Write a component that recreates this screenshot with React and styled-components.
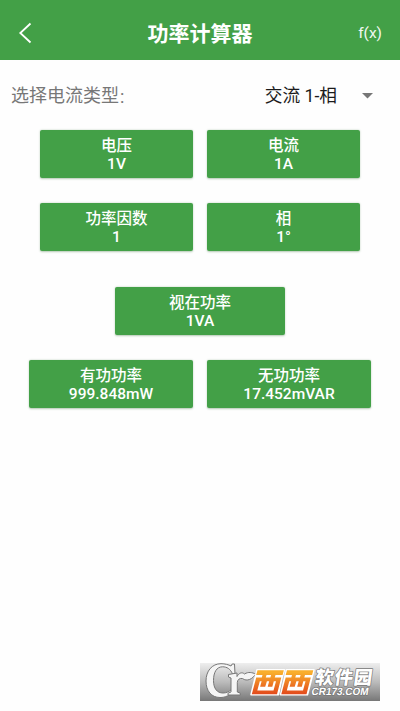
import React from "react";
import styled, { createGlobalStyle } from "styled-components";

const Global = createGlobalStyle`
  * { box-sizing: border-box; }
  body { margin: 0; background: #fefefe; font-family: Roboto, "Noto Sans CJK SC", sans-serif; }
`;
const Screen = styled.main`
  display: flex; flex-direction: column; height: 711px; overflow: hidden; background: #fefefe;
`;
const Header = styled.header`
  display: grid; grid-template-columns: 80px 1fr 80px; align-items: center;
  height: 60px; padding: 6px 18px 0; background: #43a047; color: #fff;
`;
const BackIcon = styled.svg`display: block; width: 14px; height: 22px;`;
const Title = styled.h1`
  margin: 0; padding-top: 1px; text-align: center; font-size: 21px; line-height: 28px; font-weight: 700; white-space: nowrap;
`;
const Formula = styled.span`justify-self: end; font-size: 15.5px; line-height: 20px; color: #f0f8f0;`;
const TypeRow = styled.section`
  display: flex; align-items: center; justify-content: space-between;
  height: 70px; padding: 2px 27px 0 11px;
`;
const Label = styled.span`
  display: flex; font-size: 18px; line-height: 26px; color: #777;
`;
const Colon = styled.span`margin-left: 1px; padding-top: 1px;`;
const Select = styled.div`
  display: flex; align-items: center; gap: 25px; font-size: 17.7px; line-height: 26px; color: #1b1b1b;
`;
const Caret = styled.svg`width: 11px; height: 6px;`;
const ButtonRow = styled.div`
  display: flex; justify-content: center; gap: 14px; height: 48px;
  margin-top: ${(p) => p.$top}px;
`;
const ValueButton = styled.button`
  width: ${(p) => p.$width}px; padding: 2px 0 0; border: 0; border-radius: 2px;
  background: #43a047; color: #fff; font: 500 15.5px/18px Roboto, "Noto Sans CJK SC", sans-serif;
  box-shadow: 0 0.5px 2px rgba(40, 100, 40, 0.35);
`;
const Line = styled.span`display: block; height: 18px; white-space: nowrap;`;
const Watermark = styled.svg`
  display: block; flex: none; width: 180px; height: 38px; margin: auto 0 10px 200px;
`;
const LogoText = styled.text`
  font-family: ${(p) => (p.$latin ? '"Liberation Sans", sans-serif' : '"Noto Sans CJK SC", sans-serif')};
  font-size: ${(p) => p.$size}px; font-weight: ${(p) => (p.$latin ? 700 : 900)};
  paint-order: stroke; stroke-linejoin: round;
`;

const rows = [
  { top: 0, width: 153, items: [["电压", "1V"], ["电流", "1A"]] },
  { top: 25, width: 153, items: [["功率因数", "1"], ["相", "1°"]] },
  { top: 36, width: 170, items: [["视在功率", "1VA"]] },
  { top: 25, width: 164, items: [["有功功率", "999.848mW"], ["无功功率", "17.452mVAR"]] },
];

function Logo() {
  return (
    <Watermark viewBox="0 0 180 38">
      <defs>
        <linearGradient id="plate" x2="0" y2="1"><stop stopColor="#eee" /><stop offset=".5" stopColor="#bbb" /><stop offset="1" stopColor="#777" /></linearGradient>
        <linearGradient id="orange" x2="0" y2="1"><stop offset=".1" stopColor="#f9ae2c" /><stop offset="1" stopColor="#e2491c" /></linearGradient>
      </defs>
      <path fill="url(#plate)" d="M0 0H180V38H0z" />
      <g fill="#f5f5f5" stroke="#777" strokeWidth="1" strokeLinejoin="round">
        <path d="M34.500 1 35 11h-2.500C30.500 6 27 3.800 22.500 3.800 16.500 3.800 13.500 9.500 13.500 17.500S17 30 23 30c3.500 0 6-1.200 8.500-3.500l1.500 2C29.500 32.500 25.500 34.500 20 34.500 11.500 34.500 6 28 6 18S12 .7 21 .7c4 0 7.500 1 10 2.300l1.200-2z" />
        <path d="M28.500 11.500 37 10v3.500c2-3.500 5-4.800 7.500-2.500 4-2.500 7.500-1.500 11.300 0-3.300 5-8.800 8-13.300 4.500-3-.5-5 1-5.200 4V29l3 1.200V32H28v-1.800l3-1.200V15l-2.500-1z" />
      </g>
      <path d="M57 6.700h27.500l-2 6-4 19H51zM86.500 6.700H114l-6.500 25h-27z" fill="#fff" stroke="#fff" strokeWidth="1.500" strokeLinejoin="round" />
      <g fill="url(#orange)">
        <path id="west" fillRule="evenodd" d="M57.500 7.200h26.300l-1.200 4.800h-7.100l-.7 2.600h6.500L77 31.300H51.800L56.200 14.600h5.600l.7-2.600h-6.300zM59.800 18.200l-2.500 9.300h16.200l2.500-9.300h-2.200l-1.500 5.500h-4.600l1.500-5.500h-2.300l-1.700 5.500h-5.100l1.500-5.500zM66.500 12l-.7 2.600h4.600l.7-2.600z" />
        <use href="#west" x="29.500" />
      </g>
      <g fill="#fff" stroke="#777">
        <LogoText transform="translate(114.500 21) skewX(-8)" $size={18.5} textLength="57" strokeWidth="1.400">软件园</LogoText>
        <LogoText transform="translate(111 31.500) skewX(-10)" $latin $size={10.5} textLength="57" lengthAdjust="spacingAndGlyphs" strokeWidth="1.400">CR173.COM</LogoText>
      </g>
    </Watermark>
  );
}

export default function App() {
  return (
    <Screen>
      <Global />
      <Header>
        <BackIcon viewBox="0 0 14 22"><path d="M12.500 1.500 2.300 11l10.200 9.500" fill="none" stroke="#fff" strokeWidth="1.800" /></BackIcon>
        <Title>功率计算器</Title>
        <Formula>f(x)</Formula>
      </Header>
      <TypeRow>
        <Label>选择电流类型<Colon>:</Colon></Label>
        <Select>交流 1-相<Caret viewBox="0 0 11 6"><path d="M0 0h11L5.500 5.500z" fill="#777" /></Caret></Select>
      </TypeRow>
      {rows.map((row, i) => (
        <ButtonRow key={i} $top={row.top}>
          {row.items.map(([name, value]) => (
            <ValueButton key={name} $width={row.width}><Line>{name}</Line><Line>{value}</Line></ValueButton>
          ))}
        </ButtonRow>
      ))}
      <Logo />
    </Screen>
  );
}
